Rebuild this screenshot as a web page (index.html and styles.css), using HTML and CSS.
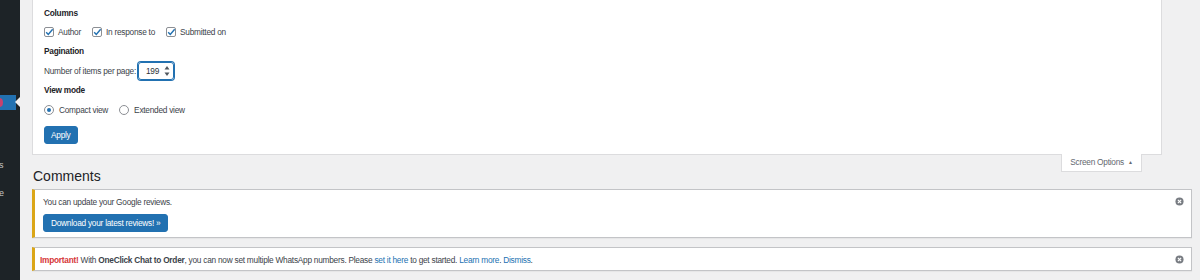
FILE: index.html
```html
<!DOCTYPE html>
<html lang="en">

<head>
    <meta charset="UTF-8">
    <title>Comments</title>
    <link rel="stylesheet" href="styles.css">
</head>

<body>

    <div class="sidebar">
        <ul class="menu">
            <li class="menu-active"><span class="menu-icon"></span></li>
            <li class="menu-item">s</li>
            <li class="menu-item">e</li>
        </ul>
    </div>

    <div class="main">

        <div class="screen-meta">
            <div class="opt-title">Columns</div>
            <div class="opt-row">
                <label class="check"><span class="box checked"></span>Author</label>
                <label class="check"><span class="box checked"></span>In response to</label>
                <label class="check"><span class="box checked"></span>Submitted on</label>
            </div>

            <div class="opt-title opt-pagination">Pagination</div>
            <div class="opt-row opt-number">
                <span>Number of items per page:</span>
                <span class="number-field">
                    <span>199</span>
                    <svg class="spin" width="6" height="12" viewBox="0 0 6 12">
                        <path d="M3 1 L5.5 4.5 L0.5 4.5 Z" fill="#50575e" />
                        <path d="M3 11 L5.5 7.5 L0.5 7.5 Z" fill="#50575e" />
                    </svg>
                </span>
            </div>

            <div class="opt-title opt-view">View mode</div>
            <div class="opt-row opt-radios">
                <label class="check"><span class="radio checked"></span>Compact view</label>
                <label class="check"><span class="radio"></span>Extended view</label>
            </div>

            <button class="btn btn-apply">Apply</button>
        </div>

        <div class="title-row">
            <h1>Comments</h1>
            <div class="screen-tab">Screen Options <span class="tab-arrow">&#9650;</span></div>
        </div>

        <div class="notice">
            <p>You can update your Google reviews.</p>
            <button class="btn btn-download">Download your latest reviews! &raquo;</button>
            <span class="dismiss"></span>
        </div>

        <div class="notice notice-short">
            <p><strong class="important">Important!</strong> With <strong>OneClick Chat to Order</strong>, you can now set multiple WhatsApp numbers. Please <a href="#">set it here</a> to get started. <a href="#">Learn more</a>. <a href="#">Dismiss</a>.</p>
            <span class="dismiss"></span>
        </div>

    </div>

</body>

</html>
```

FILE: styles.css
```css
body {
    margin: 0;
    height: 280px;
    overflow: hidden;
    display: flex;
    background-color: #f0f0f1;
    font-family: "Liberation Sans", Arial, sans-serif;
    font-size: 8.3px;
    letter-spacing: -0.25px;
    line-height: 12px;
    color: #3c434a;
}

/* admin menu, only its right edge is in view */
.sidebar {
    width: 20px;
    flex-shrink: 0;
    background-color: #1d2327;
    overflow: hidden;
}

.menu {
    list-style: none;
    margin: 0;
    padding: 95px 0 0 0;
}

.menu-active {
    position: relative;
    height: 15px;
    width: 20px;
    background: linear-gradient(to right, #2271b1 16px, transparent 16px);
}

.menu-active::after {
    content: "";
    position: absolute;
    right: 0;
    top: 2px;
    border-style: solid;
    border-width: 5.5px 5px 5.5px 0;
    border-color: transparent #f0f0f1 transparent transparent;
}

.menu-icon {
    display: block;
    position: absolute;
    left: -4px;
    top: 3px;
    width: 7px;
    height: 9px;
    border-radius: 50%;
    background-color: #c8416e;
}

.menu-item {
    height: 28px;
    line-height: 28px;
    font-size: 9px;
    color: #c3c4c7;
    text-indent: -1px;
}

.menu-active + .menu-item {
    margin-top: 41px;
}

.main {
    flex: 1;
    padding: 0 8px 0 12px;
}

/* screen options panel */
.screen-meta {
    margin-right: 30px;
    background-color: #fff;
    border: 1px solid #dcdcde;
    border-top: none;
    padding: 7px 12px 10px 11px;
    display: flex;
    flex-direction: column;
    align-items: flex-start;
}

.opt-title {
    font-weight: bold;
    color: #1d2327;
}

.opt-row {
    display: flex;
    align-items: center;
    margin-top: 7px;
}

.opt-pagination {
    margin-top: 7px;
}

.opt-number {
    margin-top: 5px;
}

.opt-view {
    margin-top: 4px;
}

.opt-radios {
    margin-top: 8px;
}

.check {
    display: flex;
    align-items: center;
    margin-right: 11px;
}

.box {
    width: 8px;
    height: 8px;
    border: 1px solid #8c8f94;
    border-radius: 2px;
    margin-right: 4px;
    background-color: #fff;
}

.box.checked {
    background: #fff url("data:image/svg+xml;utf8,<svg xmlns='http://www.w3.org/2000/svg' viewBox='0 0 10 10'><path d='M1.8 5 L4 7.4 L8.6 1.8' fill='none' stroke='%232271b1' stroke-width='1.5'/></svg>") center / 9px 9px no-repeat;
}

.radio {
    width: 8px;
    height: 8px;
    border: 1px solid #8c8f94;
    border-radius: 50%;
    margin-right: 5px;
    background-color: #fff;
    display: flex;
    align-items: center;
    justify-content: center;
}

.radio.checked::before {
    content: "";
    width: 4px;
    height: 4px;
    border-radius: 50%;
    background-color: #2271b1;
}

.number-field {
    display: flex;
    align-items: center;
    justify-content: space-between;
    box-sizing: border-box;
    width: 36px;
    height: 18px;
    margin-left: 2px;
    padding: 0 3px 0 7px;
    border: 1px solid #2271b1;
    box-shadow: 0 0 0 1px #2271b1;
    border-radius: 3px;
    color: #2c3338;
}

.btn {
    font-family: inherit;
    font-size: 8.3px;
    letter-spacing: -0.25px;
    color: #fff;
    background-color: #2271b1;
    border: 1px solid #2271b1;
    border-radius: 3px;
    height: 18px;
    padding: 0 6px;
    cursor: pointer;
}

.btn-apply {
    margin-top: 10px;
}

/* title and screen options tab */
.title-row {
    display: flex;
    justify-content: space-between;
    align-items: flex-start;
}

h1 {
    margin: 11px 0 3px 1px;
    font-size: 14px;
    font-weight: normal;
    line-height: 20px;
    letter-spacing: 0;
    color: #1d2327;
}

.screen-tab {
    margin: -1px 50px 0 0;
    width: 81px;
    height: 18px;
    box-sizing: border-box;
    background-color: #fff;
    border: 1px solid #dcdcde;
    border-top: none;
    text-align: center;
    line-height: 17px;
    font-size: 8.3px;
    color: #646970;
}

.tab-arrow {
    font-size: 5px;
    margin-left: 2px;
    vertical-align: 1px;
}

/* notices */
.notice {
    position: relative;
    background-color: #fff;
    border: 1px solid #c3c4c7;
    border-left: 3px solid #dba617;
    box-shadow: 0 1px 1px rgba(0, 0, 0, 0.04);
    padding: 6px 10px 5px 8px;
    margin-bottom: 9px;
}

.notice-short {
    padding: 6px 10px 4px 5px;
}

.notice p {
    margin: 0;
}

.btn-download {
    display: block;
    margin-top: 6px;
    padding: 0 7px;
}

.important {
    color: #d63638;
}

a {
    color: #2271b1;
    text-decoration: none;
}

.dismiss {
    position: absolute;
    right: 7px;
    top: 7px;
    width: 9px;
    height: 9px;
    background: url("data:image/svg+xml;utf8,<svg xmlns='http://www.w3.org/2000/svg' viewBox='0 0 10 10'><circle cx='5' cy='5' r='4.5' fill='%23787c82'/><path d='M3.2 3.2 L6.8 6.8 M6.8 3.2 L3.2 6.8' stroke='%23fff' stroke-width='1.3'/></svg>") center / 9px 9px no-repeat;
}
```
